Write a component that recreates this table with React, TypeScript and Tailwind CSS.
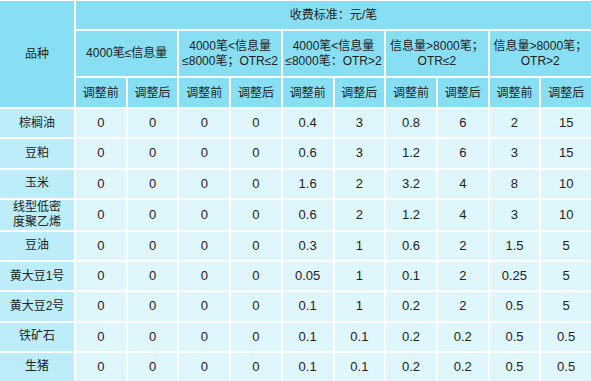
const groups = [
  ['4000笔≤信息量'],
  ['4000笔<信息量', '≤8000笔；OTR≤2'],
  ['4000笔<信息量', '≤8000笔：OTR>2'],
  ['信息量>8000笔；', 'OTR≤2'],
  ['信息量>8000笔；', 'OTR>2'],
];

const rows: [string[], string[]][] = [
  [['棕榈油'], ['0', '0', '0', '0', '0.4', '3', '0.8', '6', '2', '15']],
  [['豆粕'], ['0', '0', '0', '0', '0.6', '3', '1.2', '6', '3', '15']],
  [['玉米'], ['0', '0', '0', '0', '1.6', '2', '3.2', '4', '8', '10']],
  [['线型低密', '度聚乙烯'], ['0', '0', '0', '0', '0.6', '2', '1.2', '4', '3', '10']],
  [['豆油'], ['0', '0', '0', '0', '0.3', '1', '0.6', '2', '1.5', '5']],
  [['黄大豆1号'], ['0', '0', '0', '0', '0.05', '1', '0.1', '2', '0.25', '5']],
  [['黄大豆2号'], ['0', '0', '0', '0', '0.1', '1', '0.2', '2', '0.5', '5']],
  [['铁矿石'], ['0', '0', '0', '0', '0.1', '0.1', '0.2', '0.2', '0.5', '0.5']],
  [['生猪'], ['0', '0', '0', '0', '0.1', '0.1', '0.2', '0.2', '0.5', '0.5']],
];

const head = 'bg-[#88dff3] flex items-center justify-center text-center';

export default function App() {
  return (
    <div
      className="w-[591px] h-[381px] bg-white pt-px text-[#222] leading-[14px]"
      style={{ fontFamily: '"Liberation Sans", "Noto Sans CJK SC", sans-serif' }}
    >
      <div className="grid h-full grid-cols-[74px_repeat(10,1fr)] grid-rows-[28px_45px_29px_repeat(9,1fr)] gap-[2px]">
        {/* corner */}
        <div className={`${head} row-span-3 text-[12px]`}>品种</div>
        <div className={`${head} col-span-10 text-[12px]`}>收费标准：元/笔</div>

        {/* fee tiers */}
        {groups.map((g, i) => (
          <div key={i} className={`${head} col-span-2 flex-col text-[12px] leading-[15px]`}>
            {g.map((line) => (
              <span key={line} className="whitespace-nowrap">{line}</span>
            ))}
          </div>
        ))}

        {groups.map((_, i) => (
          <div key={i} className="contents">
            <div className={`${head} text-[12px]`}>调整前</div>
            <div className={`${head} text-[12px]`}>调整后</div>
          </div>
        ))}

        {/* body */}
        {rows.map(([name, vals], r) => (
          <div key={r} className="contents">
            <div className="bg-[#bcedf9] flex flex-col items-center justify-center text-[12px] leading-[15px]">
              {name.map((n) => (
                <span key={n}>{n}</span>
              ))}
            </div>
            {vals.map((v, c) => (
              <div key={c} className="bg-[#dff6fc] flex items-center justify-center text-[13px]">
                {v}
              </div>
            ))}
          </div>
        ))}
      </div>
    </div>
  );
}
